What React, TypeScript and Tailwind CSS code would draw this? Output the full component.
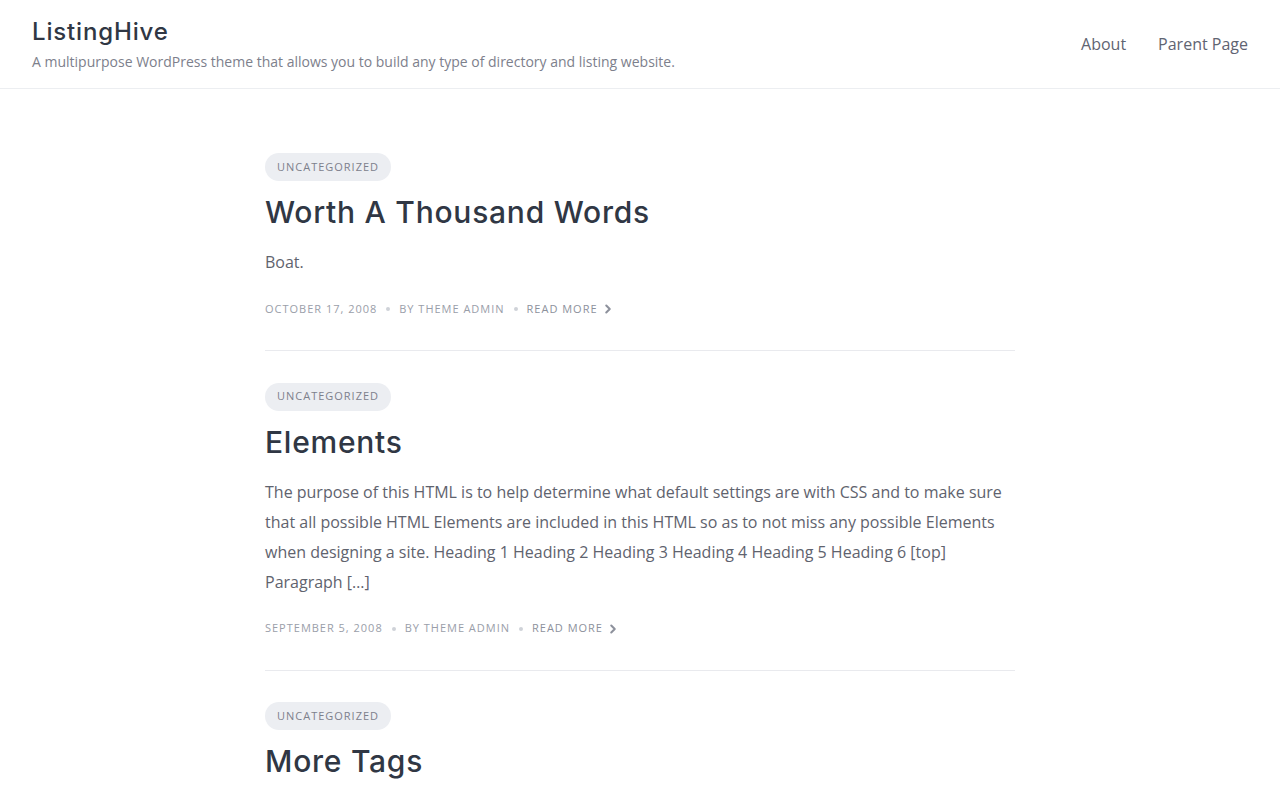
import { ChevronRight } from "lucide-react";

const heading = "font-['Inter','Noto_Sans',sans-serif]";
const body = "font-['Open_Sans','Liberation_Sans',sans-serif]";

interface Post {
  title: string;
  excerpt?: string;
  date: string;
}

const posts: Post[] = [
  { title: "Worth A Thousand Words", excerpt: "Boat.", date: "October 17, 2008" },
  {
    title: "Elements",
    excerpt:
      "The purpose of this HTML is to help determine what default settings are with CSS and to make sure that all possible HTML Elements are included in this HTML so as to not miss any possible Elements when designing a site. Heading 1 Heading 2 Heading 3 Heading 4 Heading 5 Heading 6 [top] Paragraph […]",
    date: "September 5, 2008",
  },
  {
    title: "More Tags",
    excerpt: "More tags are listed in this post. Tags are a handy way to group related posts together.",
    date: "June 21, 2008",
  },
];

function Dot() {
  return <span className="mx-[9px] inline-block h-[4px] w-[4px] rounded-full bg-[#cfd2d8]" />;
}

function PostItem({ post }: { post: Post }) {
  return (
    <article className="border-b border-[#e9eaee] pt-[31px] pb-[32px] first:pt-0">
      <a className="inline-flex h-[28px] items-center rounded-full bg-[#eceef2] px-[12px] text-[11px] uppercase tracking-[0.09em] text-[#7d808c]">
        Uncategorized
      </a>
      <h2
        className={`${heading} mt-[12px] text-[30px] font-medium leading-[39px] tracking-[0.025em] text-[#303744]`}
      >
        {post.title}
      </h2>
      {post.excerpt && (
        <p className="mt-[15px] text-[16px] leading-[30px] text-[#5f636e]">{post.excerpt}</p>
      )}
      <div className="mt-[23px] flex h-[18px] items-center text-[11px] uppercase tracking-[0.09em] text-[#9a9ea9]">
        <span>{post.date}</span>
        <Dot />
        <span>By Theme Admin</span>
        <Dot />
        <a className="flex items-center text-[#8d919c]">
          Read More
          <ChevronRight className="ml-[3px] h-[14px] w-[14px]" strokeWidth={3.5} />
        </a>
      </div>
    </article>
  );
}

export default function App() {
  return (
    <div className={`${body} min-h-screen bg-white`}>
      <header className="flex h-[89px] items-center justify-between border-b border-[#eceef1] px-[32px]">
        <div className="-mt-[1px]">
          <div
            className={`${heading} text-[24px] font-medium leading-[32px] tracking-[0.035em] text-[#303744]`}
          >
            ListingHive
          </div>
          <div className="mt-[4px] text-[14px] leading-[20px] text-[#7d808c]">
            A multipurpose WordPress theme that allows you to build any type of directory and listing website.
          </div>
        </div>
        <nav className="flex gap-[32px] text-[16px] text-[#5f6472]">
          <a>About</a>
          <a>Parent Page</a>
        </nav>
      </header>
      <main className="mx-auto w-[750px] pt-[64px]">
        {posts.map((p) => (
          <PostItem key={p.title} post={p} />
        ))}
      </main>
    </div>
  );
}
